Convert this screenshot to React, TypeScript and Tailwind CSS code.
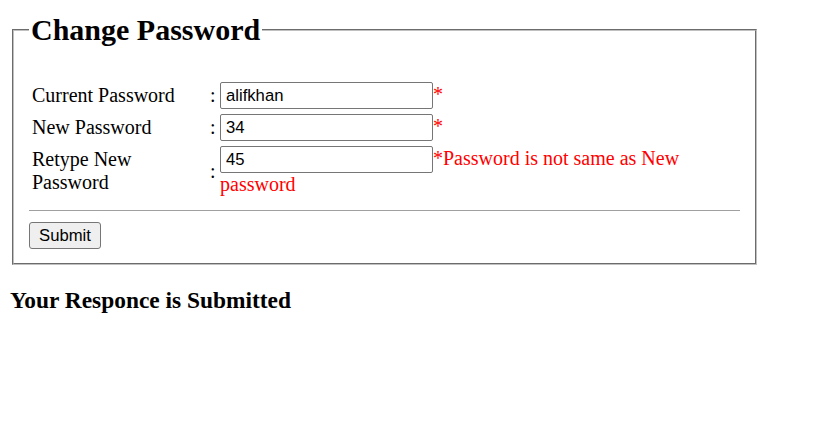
export default function App() {
  const rows = [
    { label: 'Current Password', value: 'alifkhan', error: '' },
    { label: 'New Password', value: '34', error: '' },
    { label: 'Retype New Password', value: '45', error: 'Password is not same as New password' },
  ];

  return (
    <div className="min-h-screen bg-white p-[10px] font-['Liberation_Serif','Times_New_Roman',serif] text-[20px] text-black">
      <fieldset className="mx-[2px] mt-[3px] w-[745px] border-2 border-[#c0c0c0] px-[15px] pt-[7px] pb-[14px] [border-style:groove]">
        <legend className="px-[2px] text-[30px] leading-[34px] font-bold">Change Password</legend>

        {/* empty line after the legend */}
        <div className="h-[28px]" />

        <div className="grid grid-cols-[178px_10px_1fr] items-center gap-y-[5px] pl-[3px] leading-[23px]">
          {rows.map((row) => (
            <div key={row.label} className="contents">
              <div>{row.label}</div>
              <div>:</div>
              <div>
                <input
                  type="text"
                  defaultValue={row.value}
                  className="h-[27px] w-[213px] rounded-[2px] border border-[#767676] bg-white pl-[5px] align-baseline font-['Liberation_Sans',Arial,sans-serif] text-[16.67px] text-black outline-none"
                />
                <span className="text-[#ff0000]">*{row.error}</span>
              </div>
            </div>
          ))}
        </div>

        <hr className="mt-[14px] border-t border-[#a0a0a0]" />

        <button
          type="button"
          className="mt-[11px] h-[27px] w-[72px] rounded-[3px] border border-[#767676] bg-[#efefef] font-['Liberation_Sans',Arial,sans-serif] text-[16.67px] text-black"
        >
          Submit
        </button>
      </fieldset>

      <h3 className="mt-[22px] text-[23.4px] leading-[27px] font-bold">Your Responce is Submitted</h3>
    </div>
  );
}
